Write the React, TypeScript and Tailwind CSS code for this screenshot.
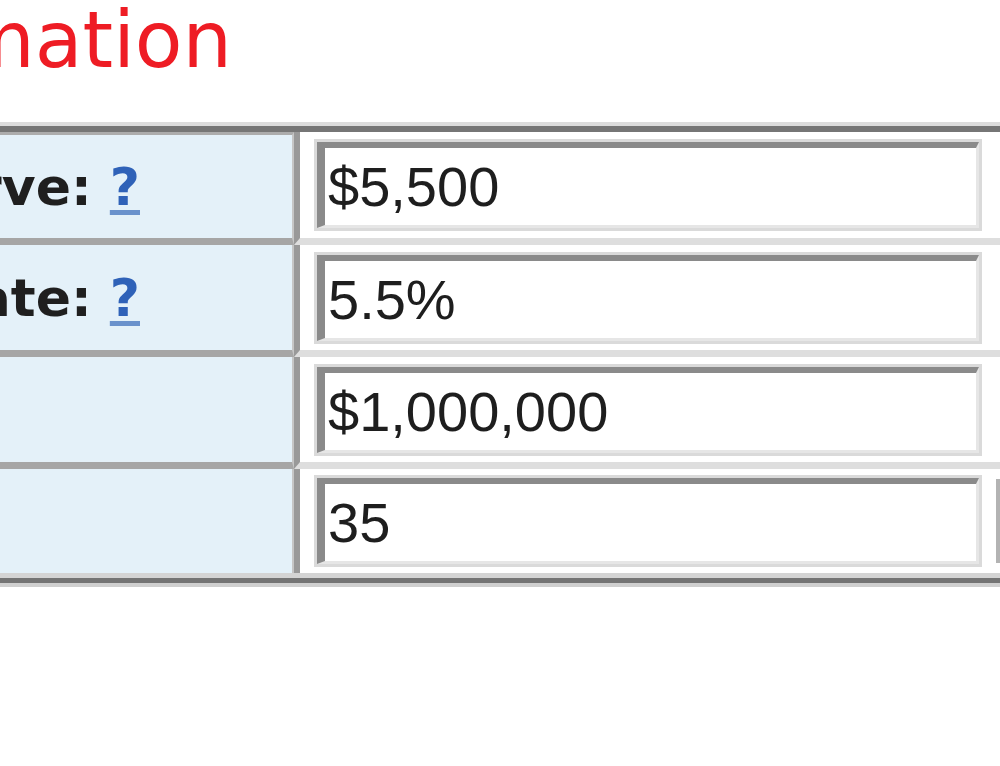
const labelFont = { fontFamily: '"DejaVu Sans", Verdana, sans-serif' };
const inputFont = { fontFamily: '"Liberation Sans", Arial, sans-serif' };

interface Row {
  label?: string;
  help?: boolean;
  value: string;
  extra?: boolean;
}

const rows: Row[] = [
  { label: "Reserve:", help: true, value: "$5,500" },
  { label: "Rate:", help: true, value: "5.5%" },
  { value: "$1,000,000" },
  { value: "35", extra: true },
];

const rowHeights = ["h-[113px]", "h-[112px]", "h-[112px]", "h-[104px]"];

function FieldRow({ row, index }: { row: Row; index: number }) {
  const last = index === rows.length - 1;
  return (
    <div className={`flex ${rowHeights[index]}`}>
      <div
        className={`flex w-[294px] shrink-0 items-center justify-end overflow-visible border-r-[2px] border-r-[#c6c6c6] bg-[#e4f1f9] pr-[152px] ${
          last ? "" : "border-b-[7px] border-b-[#a6a6a6]"
        } ${index === 0 ? "border-t-[3px] border-t-[#acacac]" : ""}`}
      >
        {row.label && (
          <span
            className="whitespace-nowrap text-[52px] font-bold text-[#1f1f1f]"
            style={labelFont}
          >
            {row.label}{" "}
            {row.help && (
              <a
                href="#"
                className="text-[#2f62b8] underline decoration-[#6a92cc] decoration-[5px] underline-offset-[5px]"
              >
                ?
              </a>
            )}
          </span>
        )}
      </div>
      <div
        className={`flex flex-1 items-center gap-[14px] border-l-[6px] border-l-[#999] bg-white pl-[14px] ${
          last ? "" : "border-b-[7px] border-b-[#dedede]"
        }`}
      >
        <div className="w-[668px] shrink-0 border-[3px] border-[#dadada]">
          <input
            readOnly
            defaultValue={row.value}
            className="block h-[86px] w-full border-t-[6px] border-l-[8px] border-b-[3px] border-r-[3px] border-t-[#8a8a8a] border-l-[#8a8a8a] border-b-[#e6e6e6] border-r-[#e6e6e6] bg-white pl-[3px] text-[56px] text-[#1e1e1e] outline-none"
            style={inputFont}
          />
        </div>
        {row.extra && (
          <div className="h-[84px] w-[60px] shrink-0 border-[4px] border-[#b3b3b3] bg-white" />
        )}
      </div>
    </div>
  );
}

export default function App() {
  return (
    <div className="h-[766px] w-[1000px] overflow-hidden bg-white">
      <div className="h-[122px] pt-[1px]">
        <div className="flex w-[232px] justify-end">
          <h1
            className="whitespace-nowrap text-[78px] font-normal leading-none text-[#ee1c24]"
            style={labelFont}
          >
            Information
          </h1>
        </div>
      </div>

      <div className="h-[4px] bg-[#dcdcdc]" />
      <div className="h-[6px] bg-[#767676]" />

      {rows.map((row, i) => (
        <FieldRow key={i} row={row} index={i} />
      ))}

      <div className="h-[5px] bg-[#d4d4d4]" />
      <div className="h-[5px] bg-[#747474]" />
      <div className="h-[4px] bg-[#cfcfcf]" />
    </div>
  );
}
